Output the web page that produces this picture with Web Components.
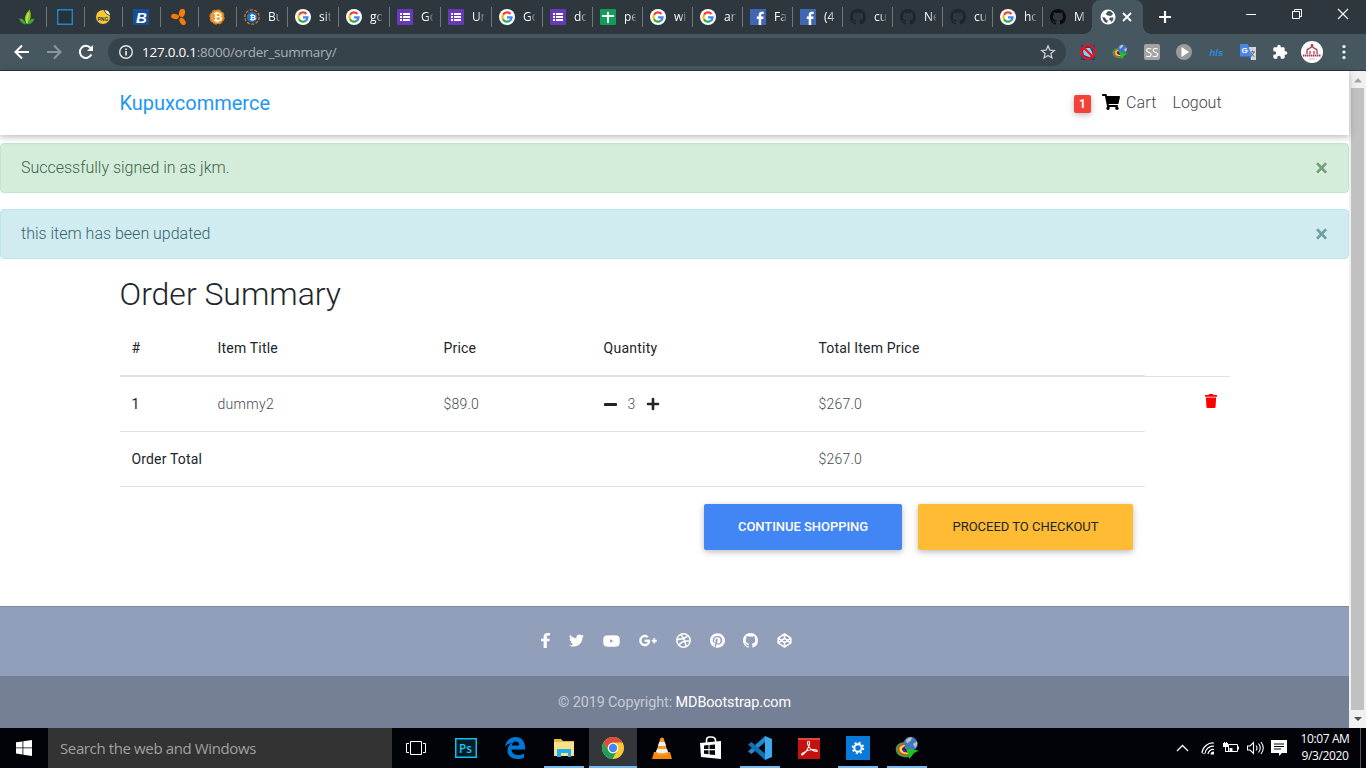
<!DOCTYPE html>
<html lang="en">
<head>
<meta charset="utf-8">
<title>Order Summary</title>
<style>
html,body{margin:0;height:100%;overflow:hidden}
body{font-family:Roboto,"Liberation Sans",sans-serif}
</style>
</head>
<body>
<desktop-screen></desktop-screen>
<script>
const GITHUB = '<path fill="currentColor" d="M8 0C3.58 0 0 3.58 0 8c0 3.54 2.29 6.53 5.47 7.59.4.07.55-.17.55-.38 0-.19-.01-.82-.01-1.49-2.01.37-2.53-.49-2.69-.94-.09-.23-.48-.94-.82-1.13-.28-.15-.68-.52-.01-.53.63-.01 1.08.58 1.23.82.72 1.21 1.87.87 2.33.66.07-.52.28-.87.51-1.07-1.78-.2-3.64-.89-3.64-3.95 0-.87.31-1.59.82-2.15-.08-.2-.36-1.02.08-2.12 0 0 .67-.21 2.2.82.64-.18 1.32-.27 2-.27.68 0 1.36.09 2 .27 1.53-1.04 2.2-.82 2.2-.82.44 1.1.16 1.92.08 2.12.51.56.82 1.27.82 2.15 0 3.07-1.87 3.75-3.65 3.95.29.25.54.73.54 1.48 0 1.07-.01 1.93-.01 2.2 0 .21.15.46.55.38A8.013 8.013 0 0016 8c0-4.42-3.58-8-8-8z"/>';
const IDM = '<circle cx="15.500" cy="8" r="7.200" fill="#4478bd"/><path d="M11 4q3-3.500 6-2.500l-1 3-4 3zM18 8l4-2.500q1 4-2 6z" fill="#b4c4cf"/><path d="M9 6C2 7 0 11 1 15c1 5 7 7 13 6l-1-5C8 16 7 12 10 8z" fill="#2aa84c"/><path d="M9 7.500C4 8.500 2 11 2.800 14.500c1 4 5 5.500 10.700 5L13 16C8 16 7 12 10 8.500z" fill="#e8462a"/><path d="M9 9c-4 1-5 3-4.300 5.200 1 3 4 4 8.300 3.800V16C8 16 7 12 10 9.500z" fill="#ffe23f"/><path d="M9.500 10.500c-3 1-3 3-2 4.200 1 1.500 3 1.800 5.500 1.800V15q-4-1-3.500-4.500z" fill="#47208c"/><path d="M11 12.500l13 2-5 2.500-4.500 6-1.500-5z" fill="#1fc21f"/>';
/* name: [viewBox, markup] */
const ICONS = {
 leaf:['0 0 16 16','<path d="M7.500 15Q3 8 10.500.5 14 8 8.500 15z" fill="#8cc820"/><path d="M7 15.500Q2 15 0 9.500q4.500-.5 6.500 4zM9 15.500q-.5-5.500 6.500-6-1.500 5-6.500 6z" fill="#3fa435"/><path d="M8 14q-1-5 1.500-10" fill="none" stroke="#d8f27a"/>'],
 square:['0 0 16 16','<path d="M.7.7h14.600v14.600H.7z" fill="#26323a" stroke="#1e88cf" stroke-width="1.400"/>'],
 png:['0 0 16 16','<path fill="#273c4b" d="M0 0h16v16H0z"/><circle cx="8" cy="8" r="7" fill="#fcc62d"/><path d="M9 1q6 0 6 6-4 1-6-6z" fill="#fff3a8"/><path d="M9 1q1 4 6 6" fill="none" stroke="#273c4b"/><text x="2.500" y="11.600" font-family="Liberation Sans" font-weight="700" font-size="5" fill="#273c4b">PNG</text>'],
 bold:['0 0 16 16','<path fill="#174f96" d="M0 0h16v16H0z"/><text x="3" y="13.500" font-family="Liberation Sans" font-weight="700" font-style="italic" font-size="15" fill="#fff">B</text>'],
 petals:['0 0 16 16','<g fill="#f57c0a"><ellipse cx="11" cy="4" rx="3" ry="4.200" transform="rotate(15 11 4)"/><ellipse cx="4" cy="7.500" rx="4" ry="2.600" transform="rotate(10 4 7.500)"/><ellipse cx="11.500" cy="12.500" rx="2.600" ry="4" transform="rotate(-35 11.500 12.500)"/></g>'],
 btc:['0 0 16 16','<circle cx="8" cy="8" r="7" fill="#f29a2e" stroke="#d27f1c" stroke-width="1.500" stroke-dasharray="3.500 2"/><text x="4.600" y="12" font-family="Liberation Sans" font-weight="700" font-size="11" fill="#fff">₿</text>'],
 btcblue:['0 0 16 16','<circle cx="8" cy="8" r="7.200" fill="none" stroke="#e2722a" stroke-width="1.300" stroke-dasharray="3 1.500"/><circle cx="8" cy="8" r="5.200" fill="#1f6fc2"/><text x="5.400" y="11" font-family="Liberation Sans" font-weight="700" font-size="8" fill="#fff">₿</text>'],
 google:['0 0 16 16','<circle cx="8" cy="8" r="8" fill="#fff"/><g fill="none" stroke-width="2.300"><path d="M11.400 4.900A4.600 4.600 0 0 0 4 5.800" stroke="#ea4335"/><path d="M4 5.800a4.600 4.600 0 0 0 0 4.500" stroke="#fbbc05"/><path d="M4 10.300a4.600 4.600 0 0 0 6.900 1.400" stroke="#34a853"/><path d="M10.900 11.700A4.600 4.600 0 0 0 12.500 8.300H8" stroke="#4285f4"/></g>'],
 forms:['0 0 16 16','<rect width="16" height="16" rx="1" fill="#673ab7"/><path fill="#fff" d="M3 4h2v2H3zm3 0h7v2H6zM3 7h2v2H3zm3 0h7v2H6zm-3 3h2v2H3zm3 0h7v2H6z"/>'],
 sheets:['0 0 16 16','<rect width="16" height="16" rx="1" fill="#0f9d58"/><path fill="#fff" d="M7 3h2v3h5v2H9v6H7V8H2V6h5z"/>'],
 fb:['0 0 16 16','<path fill="#4267b2" d="M0 0h16v16H0z"/><path fill="#fff" d="M8.700 16V10H6.800V7.500h1.900V6c0-2.200 1.200-3.300 3.200-3.300l1.800.1v2.100h-1.200c-1.100 0-1.300.5-1.300 1.200v1.400h2.400l-.3 2.500h-2.100v6z"/>'],
 github:['0 0 16 16',GITHUB],
 globe:['0 0 16 16','<circle cx="8" cy="8" r="7.500" fill="#fff"/><path fill="#45565f" d="M2.500 8q3 0 3.500 2t2 1l-1 3q-4-1-4.500-6zM8 2q4 0 5 3l-2 2-3-.5q-2 0-2-2zM13.500 8.500q0 3-2 4.500-.5-2-2.500-2.500l1-2z"/>'],
 x:['0 0 16 16','<path d="M4 4l8 8M12 4l-8 8" stroke="currentColor" stroke-width="1.800"/>'],
 plus:['0 0 16 16','<path d="M8 2v12M2 8h12" stroke="currentColor" stroke-width="2.200"/>'],
 min:['0 0 12 12','<path d="M1 6.500h10" stroke="#fff"/>'],
 restore:['0 0 12 12','<path d="M1.500 3.500h7v7h-7zM3.500 3.500v-2h7v7h-2" fill="none" stroke="#fff"/>'],
 close:['0 0 12 12','<path d="M1 1l10 10M11 1L1 11" stroke="#fff" stroke-width="1.100"/>'],
 back:['0 0 16 16','<path d="M15 8H2M8 1.500L1.500 8 8 14.500" fill="none" stroke="currentColor" stroke-width="2"/>'],
 fwd:['0 0 16 16','<path d="M1 8h13M8 1.500L14.500 8 8 14.500" fill="none" stroke="currentColor" stroke-width="2"/>'],
 reload:['0 0 16 16','<path d="M13.300 10.500A6 6 0 1 1 12.500 4" fill="none" stroke="#fff" stroke-width="2"/><path d="M15 1v6H9z" fill="#fff"/>'],
 info:['0 0 16 16','<circle cx="8" cy="8" r="6.300" fill="none" stroke="#e3e7e9" stroke-width="1.400"/><path fill="#e3e7e9" d="M7.200 7h1.700v4.500H7.200zm0-2.600h1.700V6H7.200z"/>'],
 star:['0 0 24 24','<path d="M12 2.800l2.700 6.300 6.800.6-5.200 4.500 1.600 6.700-5.900-3.600-5.900 3.600 1.600-6.700L2.500 9.700l6.800-.6z" fill="none" stroke="#c9ced1" stroke-width="1.900"/>'],
 blocked:['0 0 16 16','<path fill="#16497c" d="M1 1h14v15H1z"/><path fill="#8ed0f0" d="M5 4h5l2 4 1 4-4 1-5-2-1-4z"/><circle cx="8" cy="8" r="6.800" fill="none" stroke="#ee1118" stroke-width="2.300"/><path d="M3.200 3.200l9.600 9.600" stroke="#ee1118" stroke-width="2.300"/>'],
 idm:['0 0 24 24',IDM],
 ss:['0 0 16 16','<rect width="16" height="16" rx="2" fill="#a3a3a3"/><text x="1.500" y="13.300" font-family="Open Sans" font-size="13.500" textLength="13" lengthAdjust="spacingAndGlyphs" fill="#fff">SS</text>'],
 play:['0 0 16 16','<circle cx="8" cy="8" r="8" fill="#9b9b9b"/><path fill="#fff" d="M5.500 3v10l7.500-5z"/>'],
 hls:['0 0 16 16','<text x="1.500" y="12" font-family="Liberation Sans" font-style="italic" font-weight="700" font-size="9.500" fill="#2f8ed0">hls</text>'],
 translate:['0 0 16 16','<path fill="#d3d6d9" d="M7 3h9v13h-5z"/><path fill="#4a86ea" d="M0 0h8l3.500 12.500H0z"/><path fill="#2a5fc4" d="M8 12.500h3.500L9.500 16z"/><text x="1.500" y="9" font-family="Liberation Sans" font-weight="700" font-size="8" fill="#fff">G</text><path d="M10 8h5M12.500 6.500V8M14 8q-1 3-3.500 4.500M11 9q1 2.500 3.500 3.500" stroke="#65707a" fill="none"/>'],
 puzzle:['0 0 24 24','<path fill="#fff" d="M20.500 11H19V7c0-1.100-.9-2-2-2h-4V3.500a2.500 2.500 0 0 0-5 0V5H4c-1.100 0-2 .9-2 2v3.800h1.500a2.700 2.700 0 0 1 0 5.400H2V20c0 1.100.9 2 2 2h3.800v-1.500a2.700 2.700 0 0 1 5.400 0V22H17c1.100 0 2-.9 2-2v-4h1.500a2.500 2.500 0 0 0 0-5z"/>'],
 avatar:['0 0 22 22','<circle cx="11" cy="11" r="11" fill="#fff"/><g fill="none" stroke="#a8385a" stroke-width="1.300"><path d="M6 13V9.500q0-1.500 1.500-1.500L11 5.500 14.500 8q1.500 0 1.500 1.500V13M9 13v-3M13 13v-3"/><path d="M2 14.500h18" stroke-width="1.800" stroke-dasharray="1.500 .5"/></g><circle cx="11" cy="4.500" r="1.400" fill="#a8385a"/><path d="M8 18h6" stroke="#d6b3bd"/>'],
 dots:['0 0 4 16','<g fill="#fff"><circle cx="2" cy="2.500" r="1.600"/><circle cx="2" cy="8" r="1.600"/><circle cx="2" cy="13.500" r="1.600"/></g>'],
 cart:['0 0 576 512','<path d="M528.12 301.319l47.273-208C578.806 78.301 567.391 64 551.99 64H159.208l-9.166-44.81C147.758 8.021 137.93 0 126.529 0H24C10.745 0 0 10.745 0 24v16c0 13.255 10.745 24 24 24h69.883l70.248 343.435C147.325 417.1 136 435.222 136 456c0 30.928 25.072 56 56 56s56-25.072 56-56c0-15.674-6.447-29.835-16.824-40h209.647C430.447 426.165 424 440.326 424 456c0 30.928 25.072 56 56 56s56-25.072 56-56c0-22.172-12.888-41.332-31.579-50.405l5.517-24.276c3.413-15.018-8.002-29.319-23.403-29.319H218.117l-6.545-32h293.145c11.206 0 20.92-7.754 23.403-18.681z"/>'],
 minus:['0 0 14 14','<rect x="0" y="5.300" width="14" height="3.400" rx="1" fill="#212529"/>'],
 add:['0 0 14 14','<path d="M7 2v10M2 7h10" stroke="#212529" stroke-width="2.600" stroke-linecap="round"/>'],
 trash:['0 0 448 512','<path fill="#f00" d="M432 32H312l-9.400-18.700A24 24 0 0 0 281.100 0H166.800a23.720 23.720 0 0 0-21.400 13.300L136 32H16A16 16 0 0 0 0 48v32a16 16 0 0 0 16 16h416a16 16 0 0 0 16-16V48a16 16 0 0 0-16-16zM53.200 467a48 48 0 0 0 47.900 45h245.800a48 48 0 0 0 47.900-45L416 128H32z"/>'],
 facebook:['0 0 264 512','<path fill="#fff" d="M76.7 512V283H0v-91h76.7v-71.7C76.7 42.4 124.3 0 193.8 0c33.3 0 61.9 2.5 70.2 3.6V85h-48.2c-37.8 0-45.1 18-45.1 44.3V192H256l-11.700 91h-73.600v229"/>'],
 twitter:['0 0 512 512','<path fill="#fff" d="M459.37 151.716c.325 4.548.325 9.097.325 13.645 0 138.72-105.583 298.558-298.558 298.558-59.452 0-114.68-17.219-161.137-47.106 8.447.974 16.568 1.299 25.34 1.299 49.055 0 94.213-16.568 130.274-44.832-46.132-.975-84.792-31.188-98.112-72.772 6.498.974 12.995 1.624 19.818 1.624 9.421 0 18.843-1.3 27.614-3.573-48.081-9.747-84.143-51.98-84.143-102.985v-1.299c13.969 7.797 30.214 12.67 47.431 13.319-28.264-18.843-46.781-51.005-46.781-87.391 0-19.492 5.197-37.36 14.294-52.954 51.655 63.675 129.3 105.258 216.365 109.807-1.624-7.797-2.599-15.918-2.599-24.04 0-57.828 46.782-104.934 104.934-104.934 30.213 0 57.502 12.67 76.67 33.137 23.715-4.548 46.456-13.32 66.599-25.34-7.798 24.366-24.366 44.833-46.132 57.827 21.117-2.273 41.584-8.122 60.426-16.243-14.292 20.791-32.161 39.308-52.628 54.253z"/>'],
 youtube:['0 0 16 12','<path fill="#fff" fill-rule="evenodd" d="M3 .5Q8 0 13 .5q2.300.2 2.600 2.500.4 3 0 6-.3 2.300-2.600 2.500-5 .5-10 0Q.7 11.300.4 9 0 6 .4 3 .7.7 3 .5zM6.700 4.300v3.400l3-1.700z"/>'],
 gplus:['0 0 640 512','<path fill="#fff" stroke="#fff" stroke-width="10" d="M386.061 228.496c1.834 9.692 3.143 19.384 3.143 31.956C389.204 370.205 315.599 448 204.8 448c-106.084 0-192-85.915-192-192s85.916-192 192-192c51.864 0 95.083 18.859 128.611 50.292l-52.126 50.03c-14.145-13.621-39.028-29.599-76.485-29.599-65.484 0-118.92 54.221-118.92 121.277 0 67.056 53.436 121.277 118.92 121.277 75.961 0 104.513-54.745 108.965-82.773H204.8v-66.009h181.261zm185.406 6.437V179.2h-56.001v55.733h-55.733v56.001h55.733v55.733h56.001v-55.733H627.2v-56.001h-55.733z"/>'],
 dribbble:['0 0 16 16','<g fill="none" stroke="#fff" stroke-width="1.600"><circle cx="8" cy="8" r="7.100"/><path d="M5.300 1.500Q9.500 7 11 14.300M1 6.800Q8.500 7 12.600 2.800M3.200 13Q6.500 7.400 15 8.800"/></g>'],
 pinterest:['0 0 496 512','<path fill="#fff" d="M496 256c0 137-111 248-248 248-25.6 0-50.2-3.9-73.4-11.1 10.1-16.5 25.2-43.5 30.8-65 3-11.6 15.4-59 15.4-59 8.1 15.4 31.7 28.5 56.8 28.5 74.8 0 128.7-68.8 128.7-154.3 0-81.9-66.9-143.2-152.9-143.2-107 0-163.9 71.8-163.9 150.1 0 36.4 19.4 81.7 50.3 96.1 4.7 2.2 7.2 1.2 8.3-3.3.8-3.4 5-20.3 6.9-28.1.6-2.5.3-4.7-1.7-7.1-10.1-12.5-18.3-35.3-18.3-56.6 0-54.7 41.4-107.6 112-107.6 60.9 0 103.6 41.5 103.6 100.9 0 67.1-33.9 113.6-78 113.6-24.3 0-42.6-20.1-36.7-44.8 7-29.5 20.5-61.3 20.5-82.6 0-19-10.2-34.9-31.4-34.9-24.9 0-44.9 25.7-44.9 60.2 0 22 7.4 36.8 7.4 36.8s-24.5 103.8-29 123.2c-5 21.4-3 51.6-.9 71.2C65.4 450.9 0 361.1 0 256 0 119 111 8 248 8s248 111 248 248z"/>'],
 codepen:['0 0 16 16','<path d="M8 1l6.700 4.400v5.200L8 15l-6.700-4.400V5.400zM8 1v4.500M8 10.500V15M1.300 5.400L8 10.300l6.700-4.900M1.300 10.600L8 5.700l6.700 4.900" fill="none" stroke="#fff" stroke-width="1.700" stroke-linejoin="round"/>'],
 up:['0 0 10 6','<path d="M5 1l4 4.500H1z" fill="#a3a3a3"/>'],
 down:['0 0 10 6','<path d="M1 1h8L5 5z" fill="#505050"/>'],
 win:['0 0 16 16','<path fill="#fff" d="M0 2.300l6.500-.9v6.100H0zM7.300 1.300L16 0v7.500H7.300zM0 8.300h6.500v6.200L0 13.600zM7.300 8.300H16V16l-8.700-1.300z"/>'],
 taskview:['0 0 20 14','<path d="M4.500.5h11v13h-11zM3 2.500H.5v9H3M17 2.500h2.500v9H17" fill="none" stroke="#fff"/>'],
 ps:['0 0 22 20','<path d="M.75.75h20.500v18.500H.75z" fill="#001d26" stroke="#0cc0f0" stroke-width="1.500"/><text x="4" y="14.800" font-family="Open Sans" font-weight="600" font-size="12.500" textLength="13" lengthAdjust="spacingAndGlyphs" fill="#1cc4f4">Ps</text>'],
 edge:['0 0 20 22','<path fill="#0078d7" d="M0 10C1 4 5 0 10.500 0 17 0 20 5 20 10v2.500H6.500c.2 4 3.500 5.500 6.500 5.500 2.500 0 4.500-.7 6-1.600v4C17.500 21.300 15 22 12 22c-6 0-9.500-4-9.500-8.500 0-4 2.300-6.500 5-7.800C4.500 6 1.500 8 0 10zm6.700-1.500h7.500c0-2.500-1.200-4-3.500-4-2.200 0-3.700 1.800-4 4z"/>'],
 explorer:['0 0 22 20','<path fill="#e8b93c" d="M1 1h7l2 2h11v15H1z"/><path fill="#fbe08a" d="M1 4h20v14H1z"/><path fill="#1bb0f2" d="M4 11h14v8h-3v-4H8v4H4z"/>'],
 chrome:['0 0 24 24','<circle cx="12" cy="12" r="11" fill="#fbc934"/><path fill="#dd4b3e" d="M2.500 6.500A11 11 0 0 1 21.500 6.500H12a5.500 5.500 0 0 0-5 7.500z"/><path fill="#1e9e5a" d="M2.500 6.500A11 11 0 0 0 11.500 23l4.500-8a5 5 0 0 1-9-1z"/><circle cx="12" cy="12" r="5.200" fill="#fff"/><circle cx="12" cy="12" r="4.200" fill="#4688f1"/>'],
 vlc:['0 0 20 22','<path fill="#f5870a" d="M2 15h16l2 7H0z"/><path fill="#fb9a26" d="M8.500 1q1.500-1 3 0l5 16q-6.500 3-13 0z"/><path fill="#eee" d="M7.200 5h5.600l1.200 4H6zM5 12h10l1 3q-6 2.500-12 0z"/>'],
 store:['0 0 22 24','<path d="M6.500 7V4q0-3 3-3h2q3.500 0 4 3v2" fill="none" stroke="#fff" stroke-width="1.600"/><path fill="#fff" d="M0 7l21-2v18L1 21z"/><path fill="#05070c" d="M4 9.500l4.500-.4v4H4zm5.500-.5l5.500-.5v4.600H9.500zM4 14.200h4.500v4L4 17.700zm5.500 0H15V19l-5.500-.6z"/>'],
 vscode:['0 0 24 24','<path fill="#2489ca" d="M17 0v6L3.500 18 0 15.500z"/><path fill="#1070b3" d="M0 8.500L3.500 6 17 17.500V24z"/><path fill="#3ba9ee" d="M17 0l7 3v18l-7 3z"/>'],
 acrobat:['0 0 22 21','<path fill="#c5110f" d="M0 0h22v21H0z"/><path fill="#e64440" d="M0 0h22v2H0z"/><path d="M4 17q4-2 6.500-8t-.5-5.500q-1.500 2 1.500 6t7.500 4q1-2-4-2T5 15q-2 1-1 2z" fill="none" stroke="#fff" stroke-width="1.100"/>'],
 gear:['0 0 24 24','<path fill="#0a7ad9" d="M0 0h24v24H0z"/><circle cx="12" cy="12" r="3.700" fill="none" stroke="#fff" stroke-width="2"/><circle cx="12" cy="12" r="5.300" fill="none" stroke="#fff" stroke-width="1.800" stroke-dasharray="2 2.163"/>'],
 chev:['0 0 14 8','<path d="M1 7l6-5.500L13 7" fill="none" stroke="#fff" stroke-width="1.300"/>'],
 wifi:['0 0 14 14','<path d="M1 12A11 11 0 0 1 13 2M4 12.500A8 8 0 0 1 13 5.200M7 13a5 5 0 0 1 6-4.500" fill="none" stroke="#fff" stroke-width="1.200"/><path d="M9.500 13.500q0-3 3.500-3v3z" fill="#fff"/><path d="M1 12l3 1" stroke="#999"/>'],
 battery:['0 0 16 12','<path d="M5.500 2.500h9v7h-9zM15.500 4.500v3" fill="none" stroke="#fff"/><path fill="#fff" d="M6.500 6h3v3h-3zM0 1h5v4H3v4h3v1H2V5H0zM1 0h1v1H1zm2 0h1v1H3z"/>'],
 sound:['0 0 17 14','<path d="M.5 5h2.500L6.500 1.500v11L3 9H.5zM9 4.500q2 2.500 0 5M11.500 2.500q3.500 4.500 0 9M14 1q4.500 6 0 12" fill="none" stroke="#fff" stroke-width="1.100"/>'],
 note:['0 0 16 16','<path fill="#fff" d="M0 0h16v13h-5l-3 3v-3H0z"/><path d="M3 4h10M3 6.500h10M3 9h7" stroke="#05070c"/>'],
};
class UiIcon extends HTMLElement{
 connectedCallback(){
  const [vb,body]=ICONS[this.getAttribute('name')], w=this.getAttribute('w')||16, h=this.getAttribute('h')||w;
  (this.shadowRoot||this.attachShadow({mode:'open'})).innerHTML=`<style>:host{display:inline-block;flex:none;width:${w}px;height:${h}px}svg{display:block;width:100%;height:100%}</style><svg viewBox="${vb}" preserveAspectRatio="none">${body}</svg>`;
 }
}
customElements.define('ui-icon',UiIcon);
/* Single line of text tracked to occupy the width given in "w". */
class FitText extends HTMLElement{
 connectedCallback(){
  (this.shadowRoot||this.attachShadow({mode:'open'})).innerHTML='<style>:host{display:inline-block;white-space:pre;flex:none}</style><slot></slot>';
  this.style.letterSpacing='0px';
  const n=this.textContent.length, w=this.getBoundingClientRect().width;
  this.style.letterSpacing=((+this.getAttribute('w')-w)/n).toFixed(4)+'px';
 }
}
customElements.define('fit-text',FitText);
const define=(tag,css,html)=>customElements.define(tag,class extends HTMLElement{
 connectedCallback(){
  if(this.shadowRoot)return;
  const t=document.createElement('template');
  t.innerHTML=`<style>*{box-sizing:border-box}${css}</style>${typeof html==='function'?html(this):html}`;
  this.attachShadow({mode:'open'}).append(t.content.cloneNode(true));
 }
});

define('browser-tab',`
:host{display:flex;flex:none;height:20px;width:50px;padding-left:7px;align-items:center;border-right:1px solid #6e777c;color:#fff;box-sizing:border-box}
:host([pinned]){width:38px;padding-left:10px}
:host([first]){width:47px;padding-left:19px}
:host([wide]){width:51px}
:host([last]){border-color:transparent;width:49px}
span{margin-left:8px;width:12px;overflow:hidden;white-space:nowrap;font:12px/18px "Open Sans",sans-serif;-webkit-mask:linear-gradient(90deg,#000 45%,#0003);mask:linear-gradient(90deg,#000 45%,#0003)}
ui-icon{color:#1c262d}:host([last]) ui-icon{color:#0c0c0e}`,
 e=>`<ui-icon name="${e.getAttribute('icon')}"></ui-icon>${e.textContent?'<span><slot></slot></span>':''}`);

const tabs=[['leaf','','pinned first'],['square','','pinned'],['png','','pinned'],['bold','','pinned'],['petals','','pinned'],['btc','','pinned'],
['btcblue','Bu','wide'],['google','sit','wide'],['google','go','wide'],['forms','Go','wide'],['forms','Un','wide'],['google','Go','wide'],
['forms','do',''],['sheets','pe',''],['google','wi',''],['google','ar',''],['fb','Fa',''],['fb','(4',''],['github','cu',''],['github','Ne',''],['github','cu',''],['google','ho',''],['github','M','last']];
define('tab-strip',`
:host{display:flex;height:34px;background:#2d373d;align-items:center}
.active{align-self:stretch;width:51px;background:#465760;border-radius:8px 8px 0 0;display:flex;align-items:center;padding-left:8px;gap:3px;color:#fff;position:relative}
.active:before,.active:after{content:"";position:absolute;bottom:0;width:8px;height:8px}
.active:before{left:-8px;background:radial-gradient(circle at 0 0,transparent 7.5px,#465760 8px)}
.active:after{right:-8px;background:radial-gradient(circle at 100% 0,transparent 7.5px,#465760 8px)}
.new{margin-left:14px;color:#fff}
.win{margin-left:auto;display:flex;gap:34px;padding:0 17px 6px 0}`,
 tabs.map(t=>`<browser-tab icon="${t[0]}" ${t[2]}>${t[1]}</browser-tab>`).join('')+
 `<div class="active"><ui-icon name="globe"></ui-icon><ui-icon name="x" w="16"></ui-icon></div><ui-icon class="new" name="plus" w="16"></ui-icon>
 <div class="win"><ui-icon name="min" w="12"></ui-icon><ui-icon name="restore" w="12"></ui-icon><ui-icon name="close" w="12"></ui-icon></div>`);

define('address-bar',`
:host{display:flex;height:37px;background:#465760;border-bottom:1px solid #2b363c;align-items:center;padding-left:14px;box-sizing:border-box;color:#fff}
.nav{display:flex;gap:16px;width:94px}.nav ui-icon:nth-child(2){color:#8b979d}
.box{width:958px;height:28px;border-radius:14px;background:#37434a;display:flex;align-items:center;padding:0 10px 0 10px;font:13.500px/20px "Open Sans","Noto Sans",sans-serif;color:#a8b0b4}
.box b{font-weight:400;color:#fff}.box fit-text{margin-left:8px}.box ui-icon:last-child{margin-left:auto}
.ext{display:grid;grid-template-columns:repeat(9,32px);justify-items:center;align-items:center;margin-left:6px}`,
 `<div class="nav"><ui-icon name="back"></ui-icon><ui-icon name="fwd"></ui-icon><ui-icon name="reload"></ui-icon></div>
 <div class="box"><ui-icon name="info"></ui-icon><fit-text w="194.5"><b>127.0.0.1</b>:8000/order_summary/</fit-text><ui-icon name="star"></ui-icon></div>
 <div class="ext">${['blocked','idm','ss','play','hls','translate','puzzle'].map(n=>`<ui-icon name="${n}"></ui-icon>`).join('')}<ui-icon name="avatar" w="22"></ui-icon><ui-icon name="dots" w="4" h="16"></ui-icon></div>`);

define('shop-nav',`
:host{display:flex;height:64px;background:#fff;box-shadow:0 2px 5px rgba(0,0,0,.16),0 2px 10px rgba(0,0,0,.12);align-items:center;padding:0 127.500px 0 119.500px;box-sizing:border-box;position:relative;z-index:1}
.brand{color:#2196f3;font-size:20px;line-height:30px}
.right{margin-left:auto;display:flex;align-items:center;font-size:16px;font-weight:300;color:#444}
.badge{width:17px;height:18px;border-radius:2px;background:#f44336;color:#fff;font:700 12px/18px Roboto;text-align:center;box-shadow:0 2px 5px rgba(0,0,0,.16),0 2px 10px rgba(0,0,0,.12);margin:2px 10.500px 0 0}
.cart{color:#000;margin:-2px 6.500px 0 0}.c{margin-right:16px}.right fit-text{padding-bottom:2px}`,
 `<fit-text class="brand" w="150.5">Kupuxcommerce</fit-text><div class="right"><span class="badge">1</span><ui-icon class="cart" name="cart" w="18" h="16"></ui-icon><fit-text class="c" w="30.500">Cart</fit-text><fit-text w="49">Logout</fit-text></div>`);

define('flash-alert',`
:host{display:flex;height:50px;margin-bottom:16px;border:1px solid #c3e6cb;background:#d4edda;color:#3d6548;border-radius:4px;align-items:center;padding:0 20px;box-sizing:border-box;font-size:16px;font-weight:300}
:host([kind=info]){background:#d1ecf1;border-color:#bee5eb;color:#38646c}
fit-text{padding-bottom:2px}
i{margin-left:auto;font:700 24px/24px Roboto;opacity:.5;color:#155724;text-shadow:0 1px 0 #fff}
:host([kind=info]) i{color:#0c5460}`,
 e=>`<fit-text w="${e.getAttribute('w')}">${e.getAttribute('text')}</fit-text><i>×</i>`);

define('order-table',`
:host{display:block;width:1110px;margin-left:120px;color:#212529;font-size:14px;font-weight:300}
h2{font-size:32px;line-height:38px;font-weight:300;margin:0 0 8px -.5px;height:38px}
.row{display:grid;grid-template-columns:86px 226px 160px 215px 338px 85px;align-items:center;height:55px}
.row>*{padding-left:11.500px;height:100%;display:flex;align-items:center;border-bottom:1px solid #dee2e6;color:#444a4f}
.row>:last-child{border-color:transparent}
.row.head{height:56px;font-weight:400}.row.head>*{border-bottom-width:2px;padding-bottom:1px;color:#212529}
.row.head>:last-child{border-bottom:1px solid #dee2e6}
.row .h{font-weight:400;color:#212529}.q{gap:11px}.total>:first-child{grid-column:1/5}
.row .bin{justify-content:flex-end;padding:0 13px 6px 0}
.btns{display:flex;gap:16px;justify-content:flex-end;padding:17px 97px 0 0}
.btns div{height:46px;width:198px;border-radius:2px;background:#4285f4;color:#fff;display:flex;align-items:center;justify-content:center;padding-bottom:2px;font-size:13px;font-weight:500;box-shadow:0 2px 5px rgba(0,0,0,.16),0 2px 10px rgba(0,0,0,.12)}
.btns div:last-child{width:215px;background:#fb3;color:#212529;font-weight:400}`,
 `<h2><fit-text w="221.5">Order Summary</fit-text></h2>
 <div class="row head"><div>#</div><div><fit-text w="60.5">Item Title</fit-text></div><div><fit-text w="32.5">Price</fit-text></div><div><fit-text w="54">Quantity</fit-text></div><div><fit-text w="101">Total Item Price</fit-text></div><div></div></div>
 <div class="row"><div class="h">1</div><div><fit-text w="56.5">dummy2</fit-text></div><div><fit-text w="35.5">$89.0</fit-text></div><div class="q"><ui-icon name="minus" w="13"></ui-icon><span>3</span><ui-icon name="add" w="14"></ui-icon></div><div><fit-text w="43.5">$267.0</fit-text></div><div class="bin"><ui-icon name="trash" w="12" h="14"></ui-icon></div></div>
 <div class="row total"><div class="h"><fit-text w="70.5">Order Total</fit-text></div><div><fit-text w="43.5">$267.0</fit-text></div><div></div></div>
 <div class="btns"><div><fit-text w="130">CONTINUE SHOPPING</fit-text></div><div><fit-text w="146">PROCEED TO CHECKOUT</fit-text></div></div>`);

define('site-footer',`
:host{display:block;margin-top:auto;color:#fff}
.social{height:70px;background:#929fba;border-top:1px solid #7e8aa3;display:flex;align-items:center;padding:0 0 2px 541px}
.copy{height:52px;background:#758096;display:flex;align-items:center;justify-content:center;font-size:14.400px;font-weight:400;color:rgba(255,255,255,.6);white-space:pre}
.copy b{font-weight:400;color:#fff}`,
 `<div class="social">${[['facebook',9,15,19],['twitter',15,15,19],['youtube',17,12,19],['gplus',18,15,19],['dribbble',15,15,19],['pinterest',15,15,18],['github',15,15,19],['codepen',15,15,0]].map(([n,w,h,g])=>`<ui-icon name="${n}" w="${w}" h="${h}" style="margin-right:${g}px"></ui-icon>`).join('')}</div>
 <div class="copy"><fit-text w="233">© 2019 Copyright: <b>MDBootstrap.com</b></fit-text></div>`);

define('page-view',`
:host{display:flex;height:657px;background:#fff}
main{width:1349px;display:flex;flex-direction:column}
.alerts{padding-top:8px}
.bar{width:17px;background:#f1f1f1;display:flex;flex-direction:column;align-items:center;justify-content:space-between;padding:6px 0}
.thumb{width:13px;height:622px;background:#c1c1c1;margin-bottom:1px}`,
 `<main><shop-nav></shop-nav><div class="alerts"><flash-alert w="208.5" text="Successfully signed in as jkm."></flash-alert><flash-alert kind="info" w="189.5" text="this item has been updated"></flash-alert></div>
 <order-table></order-table><site-footer></site-footer></main>
 <div class="bar"><ui-icon name="up" w="10" h="6"></ui-icon><div class="thumb"></div><ui-icon name="down" w="10" h="6"></ui-icon></div>`);

const apps=[['taskview',20,14,''],['ps',22,20,''],['edge',20,22,''],['explorer',22,20,'run'],['chrome',24,24,'run on'],['vlc',20,22,''],['store',22,24,''],['vscode',24,24,'run'],['acrobat',22,21,''],['gear',24,24,'run'],['idm',24,24,'run']];
define('task-bar',`
:host{display:flex;height:40px;background:#010309;align-items:center;color:#fff;font-family:"Open Sans","Noto Sans",sans-serif}
.start{width:48px;display:flex;justify-content:center}
.search{width:344px;height:40px;background:#333;color:#a0a0a0;font-size:15px;display:flex;align-items:center;padding-left:12px}
.apps{display:flex;gap:1px}
.app{width:48px;height:40px;display:flex;align-items:center;justify-content:center;position:relative}
.app:first-child{margin-right:1px}
.run:after{content:"";position:absolute;bottom:0;left:4px;width:40px;height:2px;background:#76b9ed}
.on{background:#33363b}.on:after{left:0;width:48px}
.tray{margin-left:auto;display:flex;align-items:center}
.clock{font-size:12px;line-height:17px;width:52px;text-align:center;margin:-2px 9px 0 12px}
.peek{width:6px;height:40px;border-left:1px solid #555}`,
 `<div class="start"><ui-icon name="win"></ui-icon></div><div class="search"><fit-text w="196">Search the web and Windows</fit-text></div>
 <div class="apps">${apps.map(a=>`<div class="app ${a[3]}"><ui-icon name="${a[0]}" w="${a[1]}" h="${a[2]}"></ui-icon></div>`).join('')}</div>
 <div class="tray"><ui-icon name="chev" w="13" h="8" style="margin-right:12px"></ui-icon><ui-icon name="wifi" w="14" style="margin-right:8px"></ui-icon><ui-icon name="battery" w="16" h="12" style="margin-right:8px"></ui-icon><ui-icon name="sound" w="17" h="14" style="margin-right:7px"></ui-icon><ui-icon name="note"></ui-icon>
 <div class="clock"><fit-text w="49">10:07 AM</fit-text><fit-text w="47">9/3/2020</fit-text></div><div class="peek"></div></div>`);

define('desktop-screen',`:host{display:flex;flex-direction:column;width:1366px;height:768px;overflow:hidden}`,
 `<tab-strip></tab-strip><address-bar></address-bar><page-view></page-view><task-bar></task-bar>`);
</script>
</body>
</html>
